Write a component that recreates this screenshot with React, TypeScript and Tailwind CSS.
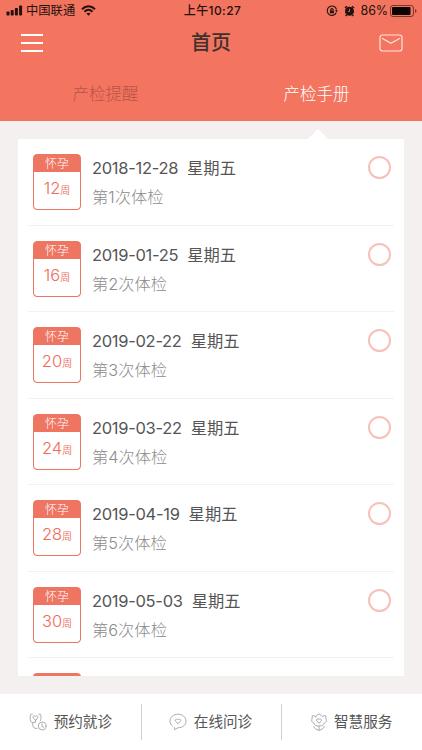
import clsx from "clsx";
import type { ReactElement, SVGProps } from "react";

interface Checkup {
  date: string;
  title: string;
  week: number;
  weekday: string;
}

interface BottomAction {
  Icon: (props: SVGProps<SVGSVGElement>) => ReactElement;
  iconClassName: string;
  label: string;
}

const CHECKUPS: readonly Checkup[] = [
  { date: "2018-12-28", title: "第1次体检", week: 12, weekday: "星期五" },
  { date: "2019-01-25", title: "第2次体检", week: 16, weekday: "星期五" },
  { date: "2019-02-22", title: "第3次体检", week: 20, weekday: "星期五" },
  { date: "2019-03-22", title: "第4次体检", week: 24, weekday: "星期五" },
  { date: "2019-04-19", title: "第5次体检", week: 28, weekday: "星期五" },
  { date: "2019-05-03", title: "第6次体检", week: 30, weekday: "星期五" },
];

function StethoscopeIcon(props: SVGProps<SVGSVGElement>) {
  return (
    <svg fill="none" stroke="currentColor" strokeLinecap="round" viewBox="0 0 18 18" {...props}>
      <path d="M3.200 1.200H2.200C1.500 1.200 1.300 1.600 1.500 2.300C0.800 4.500 1.200 6.700 1.800 8.200C2.200 9.200 3 9.600 3.800 9.600V12C3.800 14.700 5.200 15.500 8 15.500" />
      <path d="M9.800 1.200H11C11.700 1.200 11.900 1.600 11.700 2.300C12.400 4.500 12 6.300 11.300 7.700" />
      <path d="M6.500 7.200L4.400 5C3.100 3.300 5.100 1.900 6.500 3.300C7.900 1.900 9.900 3.300 8.600 5ZM6.500 7.200V9.300H4" />
      <circle cx="13.200" cy="13" r="3.900" />
      <path d="M13 10.900V13.300L14.700 14.200" />
    </svg>
  );
}

function ChatHeartIcon(props: SVGProps<SVGSVGElement>) {
  return (
    <svg fill="none" stroke="currentColor" strokeLinejoin="round" viewBox="0 0 18 18" {...props}>
      <path d="M5.300 14.100L5.800 16.700L9.200 14.700C13.800 14.700 17 11.900 17 8.100C17 4.200 13.500 1.200 9 1.200S1 4.200 1 8.100C1 10.200 1.900 12 3.600 13.200" />
      <path d="M9 10.700L6.600 8.400C5.300 6.700 7.500 5.300 9 6.800C10.500 5.300 12.700 6.700 11.400 8.400Z" />
    </svg>
  );
}

function FlowerIcon(props: SVGProps<SVGSVGElement>) {
  return (
    <svg fill="none" stroke="currentColor" strokeLinecap="round" strokeLinejoin="round" viewBox="0 0 18 18" {...props}>
      <path d="M5.800 3.700C6.600 2.600 7.500 1.300 9 1C10.500 1.300 11.400 2.600 12.200 3.700C13.500 2.500 14.800 2.500 16 3C15.600 4.300 15.700 5.300 16.200 6.500C16.700 8.300 15.700 9.500 14.400 9.900C13.700 12.200 11.500 13 9 13S4.300 12.200 3.600 9.900C2.300 9.500 1.300 8.300 1.800 6.500C2.300 5.300 2.400 4.300 2 3C3.200 2.500 4.500 2.500 5.800 3.700Z" />
      <path d="M9 10L6.900 8C5.700 6.400 7.700 5 9 6.400C10.300 5 12.300 6.400 11.100 8Z" />
      <path d="M9 13V17.200M3.800 13.500C4.300 15.700 6.600 17 9 17.200C11.400 17 13.700 15.700 14.200 13.500" />
    </svg>
  );
}

const BOTTOM_ACTIONS: readonly BottomAction[] = [
  { Icon: StethoscopeIcon, iconClassName: "mr-[7px]", label: "预约就诊" },
  { Icon: ChatHeartIcon, iconClassName: "mr-[7px]", label: "在线问诊" },
  { Icon: FlowerIcon, iconClassName: "mr-[6px]", label: "智慧服务" },
];

function StatusBar() {
  return (
    <div className="grid h-[22px] grid-cols-3 items-center text-[12px] leading-none text-[#24110e]">
      <div className="flex items-center pl-[6px]">
        <svg className="h-[11px] w-[17px]" fill="currentColor" viewBox="0 0 17 11">
          <rect height="4" rx="0.8" width="3" x="0.500" y="6.500" />
          <rect height="5.500" rx="0.800" width="3" x="4.700" y="5" />
          <rect height="7.500" rx="0.800" width="3" x="8.900" y="3" />
          <rect height="10" rx="0.800" width="3" x="13.100" y="0.500" />
        </svg>
        <span className="ml-[3px] text-[12.3px]">中国联通</span>
        <svg className="ml-[6px] h-[11px] w-[15px]" fill="none" stroke="currentColor" strokeWidth="2" viewBox="0 0 15 11">
          <path d="M1 4.200C4.800 0.400 10.200 0.400 14 4.200" />
          <path d="M3.500 6.700C5.900 4.400 9.100 4.400 11.500 6.700" />
          <path d="M7.500 10.700L5.400 8.500Q7.500 6.900 9.600 8.500Z" fill="currentColor" stroke="none" />
        </svg>
      </div>
      <div className="pl-[3px] text-center font-medium tracking-[0.400px]">上午10:27</div>
      <div className="flex items-center justify-end pr-[5px]">
        <svg className="h-[12px] w-[12px]" fill="none" stroke="currentColor" strokeWidth="1.100" viewBox="0 0 12 12">
          <path d="M10.300 7.500A4.700 4.700 0 1 1 10.500 4.500" />
          <path d="M9 5.200H12L10.500 7.300Z" fill="currentColor" stroke="none" />
          <rect fill="currentColor" height="2.700" stroke="none" width="4" x="3.900" y="5.600" />
          <path d="M4.700 5.700V4.500Q5.900 2.800 7.100 4.500V5.700" />
        </svg>
        <svg className="ml-[6px] h-[12px] w-[11px]" viewBox="0 0 11 12">
          <circle cx="5.500" cy="6.300" fill="currentColor" r="4.500" />
          <path d="M1 3L3 1.200M10 3L8 1.200M2.500 9.800L1.700 11M8.500 9.800L9.300 11" stroke="currentColor" strokeWidth="1.500" />
          <path d="M5.500 3.800V6.600H3.900" fill="none" stroke="#f37560" strokeWidth="0.800" />
        </svg>
        <span className="ml-[6px] text-[12.500px] tracking-[-0.100px]">86%</span>
        <svg className="ml-[2px] h-[12px] w-[27px]" viewBox="0 0 27 12">
          <rect fill="none" height="11" opacity="0.600" rx="2.500" stroke="currentColor" width="23" x="0.500" y="0.500" />
          <rect fill="#0b0504" height="8" rx="1" width="18.500" x="2" y="2" />
          <path d="M25 4V8Q26.600 7.300 26.600 6T25 4" fill="currentColor" opacity="0.600" />
        </svg>
      </div>
    </div>
  );
}

function Header() {
  return (
    <header className="h-[121px] shrink-0 bg-[#f37560]">
      <StatusBar />
      <div className="flex h-[42px] items-center justify-between pr-[19px] pl-[21px]">
        <button aria-label="菜单" className="flex w-[22px] flex-col gap-[6px]" type="button">
          <span className="h-[2px] w-full bg-white" />
          <span className="h-[2px] w-full bg-white" />
          <span className="h-[2px] w-full bg-white" />
        </button>
        <h1 className="text-[20px] leading-none font-medium text-[#40302e]">首页</h1>
        <button aria-label="消息" type="button">
          <svg className="block h-[18px] w-[24px]" fill="none" stroke="#ffe5df" strokeWidth="1.200" viewBox="0 0 24 18">
            <rect height="16" rx="2.500" width="22" x="1" y="1" />
            <path d="M3 4.300L12 9.300L21 4.300" />
          </svg>
        </button>
      </div>
      <div className="grid h-[58px] grid-cols-2 items-center pt-[2px] text-center text-[16.500px] leading-none font-light">
        <span className="text-[#b85448]">产检提醒</span>
        <span className="text-white">产检手册</span>
      </div>
    </header>
  );
}

function WeekBadge({ week }: { week: number }) {
  return (
    <div className="flex h-[56px] w-[48px] shrink-0 flex-col overflow-hidden rounded-[4px] border border-[#ee7562] bg-[#ee7562] text-center text-[#ee6c59]">
      <span className="h-[17px] shrink-0 text-[12px] leading-[17px] font-light text-white">怀孕</span>
      <span className="flex-1 rounded-b-[3px] bg-white pt-[7px] text-[16.500px] leading-[18px] font-[350]">
        {week}
        <span className="text-[10px]">周</span>
      </span>
    </div>
  );
}

function CheckupRow({ checkup }: { checkup: Checkup }) {
  return (
    <li className="mx-[10px] flex h-[86.500px] shrink-0 border-b border-[#f3f2f2] pt-[15px] pr-[3px] pl-[5px]">
      <WeekBadge week={checkup.week} />
      <div className="ml-[11px] flex-1">
        <p className="flex pt-[3px] text-[16.500px] leading-[22px] text-[#555555]">
          <span className="tracking-[-0.300px]">{checkup.date}</span>
          <span className="ml-[9px] text-[16.300px]">{checkup.weekday}</span>
        </p>
        <p className="mt-[7px] text-[16.300px] leading-[22px] font-light text-[#8c8c8c]">{checkup.title}</p>
      </div>
      <span className="mt-[2px] h-[23px] w-[23px] rounded-full border-2 border-[#f6c1b9]" />
    </li>
  );
}

function BottomBar() {
  return (
    <nav className="grid h-[56px] shrink-0 grid-cols-3 items-center bg-white">
      {BOTTOM_ACTIONS.map(({ Icon, iconClassName, label }, index) => (
        <button
          className={clsx(
            "flex h-[36px] items-center justify-center text-[14.600px] leading-none text-[#555555]",
            index > 0 && "border-l border-[#cfcfcf] pr-[2px]",
          )}
          key={label}
          type="button"
        >
          <Icon className={clsx("h-[18px] w-[18px] shrink-0 text-[#aaaaaa]", iconClassName)} />
          {label}
        </button>
      ))}
    </nav>
  );
}

export default function App() {
  return (
    <div className="flex h-[750px] w-[422px] flex-col overflow-hidden bg-[#f4f0f0] font-[Inter,'Noto_Sans_CJK_SC',sans-serif]">
      <Header />
      <main className="flex min-h-0 flex-1 flex-col px-[18px] pb-[18px]">
        <div className="flex h-[18px] shrink-0 items-end justify-end pr-[76px]">
          <svg className="block h-[10px] w-[20px]" viewBox="0 0 20 10">
            <path d="M0 10L10 0L20 10Z" fill="white" />
          </svg>
        </div>
        <ul className="flex min-h-0 flex-1 flex-col overflow-hidden bg-white">
          {CHECKUPS.map((checkup) => (
            <CheckupRow checkup={checkup} key={checkup.date} />
          ))}
          <li className="mt-[15px] ml-[15px] h-[4px] w-[48px] shrink-0 rounded-t-[4px] bg-[#ee7562]" />
        </ul>
      </main>
      <BottomBar />
    </div>
  );
}
